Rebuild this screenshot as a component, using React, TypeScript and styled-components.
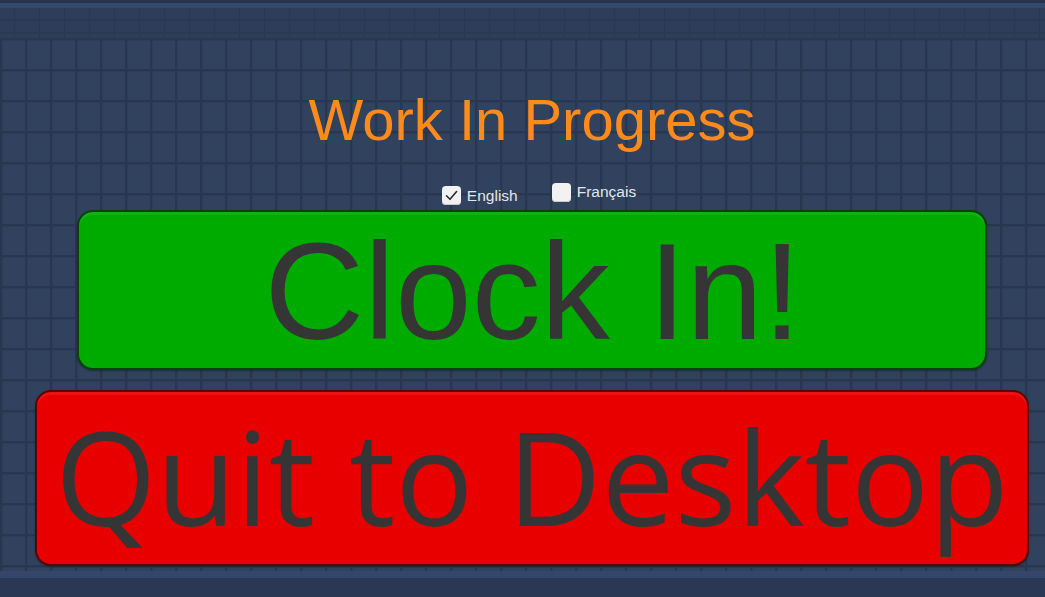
import React, { useState } from "react";
import styled, { createGlobalStyle } from "styled-components";

const GlobalStyle = createGlobalStyle`
  * { box-sizing: border-box; }
  html, body { margin: 0; padding: 0; width: 1045px; height: 597px; overflow: hidden; }
  body { font-family: "Liberation Sans", Arial, sans-serif; background: #30415f; }
`;

const Page = styled.div`
  width: 1045px;
  height: 597px;
  display: flex;
  flex-direction: column;
  background-color: #31425f;
  background-image:
    repeating-linear-gradient(90deg, #2a3953 0px, #27354e 1px, #2a3953 2px, rgba(49, 66, 95, 0) 3px, rgba(49, 66, 95, 0) 25px),
    repeating-linear-gradient(180deg, #2a3953 0px, #27354e 1px, #2a3953 2px, rgba(49, 66, 95, 0) 3px, rgba(49, 66, 95, 0) 31px);
  background-position: 0px 7px, 0px 7px;
`;

const TopBar = styled.div`
  height: 40px;
  flex: none;
  border-top: 3px solid #27344c;
  background-color: #2e3d5a;
  background-image:
    linear-gradient(180deg, #35486b 0px, #35486b 5px, transparent 5px),
    repeating-linear-gradient(180deg, transparent 0px, transparent 11px, #2a3852 11px, #2a3852 13px),
    repeating-linear-gradient(90deg, #2a3852 0px, #2a3852 1px, transparent 1px, transparent 25px);
  background-position: 0 0, 0 5px, 14px 5px;
  border-bottom: 2px solid #29384f;
`;

const Content = styled.main`
  flex: 1;
  display: flex;
  flex-direction: column;
  align-items: center;
  padding-left: 19px;
`;

const Title = styled.h1`
  margin: 51px 0 0 0;
  font-family: "Liberation Sans", Arial, sans-serif;
  font-weight: 400;
  font-size: 58px;
  line-height: 58px;
  color: #ff8a1c;
  white-space: nowrap;
`;

const LangRow = styled.div`
  margin-top: 34px;
  height: 25px;
  display: flex;
  align-items: flex-start;
  gap: 34px;
  padding-left: 14px;
`;

const LangOption = styled.label<{ $drop: number }>`
  display: flex;
  align-items: center;
  gap: 6px;
  margin-top: ${(p) => p.$drop}px;
  cursor: pointer;
  font-family: "Liberation Sans", Arial, sans-serif;
  font-size: 15.5px;
  color: #e4e6ee;
`;

const Box = styled.span`
  width: 19px;
  height: 19px;
  border-radius: 4px;
  background: #f2f2f2;
  box-shadow: inset 0 -1px 0 #c9c9c9;
  display: flex;
  align-items: center;
  justify-content: center;
`;

const LangText = styled.span<{ $lift: number }>`
  margin-top: ${(p) => -p.$lift}px;
`;

const BigButton = styled.button<{ $bg: string; $edge: string; $w: number; $h: number }>`
  width: ${(p) => p.$w}px;
  height: ${(p) => p.$h}px;
  flex: none;
  border: 2px solid ${(p) => p.$edge};
  border-radius: 16px;
  background: ${(p) => p.$bg};
  box-shadow: inset 0 3px 0 rgba(255, 255, 255, 0.07), 0 1px 2px rgba(0, 0, 0, 0.35);
  color: #353535;
  display: flex;
  align-items: center;
  justify-content: center;
  padding: 0;
  cursor: pointer;
  white-space: nowrap;
`;

const ClockButton = styled(BigButton)`
  margin-top: 2px;
  font-family: "Liberation Sans", Arial, sans-serif;
  font-size: 138px;
  line-height: 1;
  padding-top: 2px;
  padding-bottom: 0;
  padding-left: 2px;
`;

const QuitButton = styled(BigButton)`
  margin-top: 20px;
  font-family: "Open Sans", "Noto Sans", sans-serif;
  font-size: 130px;
  line-height: 1;
  padding-bottom: 5px;
`;

const BottomBar = styled.div`
  height: 26px;
  flex: none;
  background: #2a3856;
  border-top: 7px solid #34466a;
`;

const Check = () => (
  <svg width="15" height="15" viewBox="0 0 15 15" fill="none">
    <path d="M2.5 7.8 L6 11.3 L12.6 3.6" stroke="#2b2b2b" strokeWidth="1.6" strokeLinecap="round" strokeLinejoin="round" />
  </svg>
);

export default function App() {
  const [lang, setLang] = useState<"en" | "fr">("en");
  return (
    <>
      <GlobalStyle />
      <Page>
        <TopBar />
        <Content>
          <Title>Work In Progress</Title>
          <LangRow>
            <LangOption $drop={3} onClick={() => setLang("en")}>
              <Box>{lang === "en" && <Check />}</Box>
              <LangText $lift={0}>English</LangText>
            </LangOption>
            <LangOption $drop={0} onClick={() => setLang("fr")}>
              <Box>{lang === "fr" && <Check />}</Box>
              <LangText $lift={2}>Français</LangText>
            </LangOption>
          </LangRow>
          <ClockButton $bg="#00ab00" $edge="#0c3f0c" $w={910} $h={160}>
            Clock In!
          </ClockButton>
          <QuitButton $bg="#e80000" $edge="#5a0505" $w={994} $h={176}>
            Quit to Desktop
          </QuitButton>
        </Content>
        <BottomBar />
      </Page>
    </>
  );
}
